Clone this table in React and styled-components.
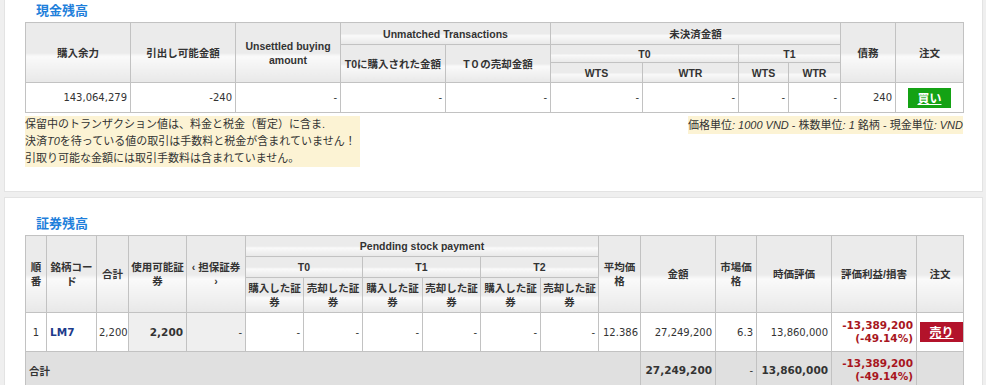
import React from "react";
import styled, { createGlobalStyle } from "styled-components";

const cashCols = [105, 105, 105, 105, 105, 92, 96, 50, 52, 55, 68];
const stockCols = [21, 50, 32, 58, 59, 58, 59, 60, 58, 60, 58, 42, 75, 41, 75, 85, 47];

const GlobalStyle = createGlobalStyle`
  html, body {
    margin: 0;
    padding: 0;
    overflow: hidden;
  }
  body {
    background: #efefef;
    font-family: "DejaVu Sans", "Noto Sans CJK JP", sans-serif;
    font-size: 10px;
    color: #333;
  }
  * {
    box-sizing: border-box;
  }
`;

const App = () => {
  return (
    <Page>
      <GlobalStyle />
      <Panel $top={0} $bottom={24} $noTop>
        <Title>現金残高</Title>
        <Table>
          <colgroup>
            {cashCols.map((w, i) => (
              <col key={i} style={{ width: w }} />
            ))}
          </colgroup>
          <thead>
            <Row $h={22}>
              <Th rowSpan={3}>購入余力</Th>
              <Th rowSpan={3}>引出し可能金額</Th>
              <Th rowSpan={3}>Unsettled buying amount</Th>
              <Th colSpan={2}>Unmatched Transactions</Th>
              <Th colSpan={4}>未決済金額</Th>
              <Th rowSpan={3}>債務</Th>
              <Th rowSpan={3}>注文</Th>
            </Row>
            <Row $h={18}>
              <Th rowSpan={2}>T0に購入された金額</Th>
              <Th rowSpan={2}>T０の売却金額</Th>
              <Th colSpan={2}>T0</Th>
              <Th colSpan={2}>T1</Th>
            </Row>
            <Row $h={20}>
              <Th>WTS</Th>
              <Th>WTR</Th>
              <Th>WTS</Th>
              <Th>WTR</Th>
            </Row>
          </thead>
          <tbody>
            <Row $h={30}>
              <Td>143,064,279</Td>
              <Td>-240</Td>
              <Td>-</Td>
              <Td>-</Td>
              <Td>-</Td>
              <Td>-</Td>
              <Td>-</Td>
              <Td>-</Td>
              <Td>-</Td>
              <Td>240</Td>
              <Td $align="center">
                <OrderButton $kind="buy">買い</OrderButton>
              </Td>
            </Row>
          </tbody>
        </Table>
        <Notes>
          <NoteBox>
            保留中のトランザクション値は、料金と税金（暫定）に含ま.
            <br />
            決済<i>T0</i>を待っている値の取引は手数料と税金が含まれていません！
            <br />
            引取り可能な金額には取引手数料は含まれていません。
          </NoteBox>
          <UnitNote>
            価格単位<i>: 1000 VND</i> - 株数単位<i>: 1</i> 銘柄 - 現金単位<i>: VND</i>
          </UnitNote>
        </Notes>
      </Panel>

      <Panel $top={15} $bottom={20}>
        <Title>証券残高</Title>
        <Table>
          <colgroup>
            {stockCols.map((w, i) => (
              <col key={i} style={{ width: w }} />
            ))}
          </colgroup>
          <thead>
            <Row $h={21}>
              <Th rowSpan={3}>順番</Th>
              <Th rowSpan={3}>銘柄コード</Th>
              <Th rowSpan={3}>合計</Th>
              <Th rowSpan={3}>使用可能証券</Th>
              <Th rowSpan={3}>‹ 担保証券 ›</Th>
              <Th colSpan={6}>Pendding stock payment</Th>
              <Th rowSpan={3}>平均価格</Th>
              <Th rowSpan={3}>金額</Th>
              <Th rowSpan={3}>市場価格</Th>
              <Th rowSpan={3}>時価評価</Th>
              <Th rowSpan={3}>評価利益/損害</Th>
              <Th rowSpan={3}>注文</Th>
            </Row>
            <Row $h={21}>
              <Th colSpan={2}>T0</Th>
              <Th colSpan={2}>T1</Th>
              <Th colSpan={2}>T2</Th>
            </Row>
            <Row $h={35}>
              <Th>購入した証券</Th>
              <Th>売却した証券</Th>
              <Th>購入した証券</Th>
              <Th>売却した証券</Th>
              <Th>購入した証券</Th>
              <Th>売却した証券</Th>
            </Row>
          </thead>
          <tbody>
            <Row $h={39}>
              <Td $align="center">1</Td>
              <Td $align="left">
                <Code>LM7</Code>
              </Td>
              <Td $tight>2,200</Td>
              <Td $bold $shade>
                2,200
              </Td>
              <Td $shade>-</Td>
              <Td>-</Td>
              <Td>-</Td>
              <Td>-</Td>
              <Td>-</Td>
              <Td>-</Td>
              <Td>-</Td>
              <Td $tight>12.386</Td>
              <Td>27,249,200</Td>
              <Td>6.3</Td>
              <Td>13,860,000</Td>
              <Td>
                <Loss>
                  -13,389,200
                  <br />
                  (-49.14%)
                </Loss>
              </Td>
              <Td $align="center">
                <OrderButton $kind="sell">売り</OrderButton>
              </Td>
            </Row>
            <TotalRow $h={37}>
              <Td colSpan={12} $align="left" $bold>
                合計
              </Td>
              <Td $bold>27,249,200</Td>
              <Td>-</Td>
              <Td $bold>13,860,000</Td>
              <Td>
                <Loss>
                  -13,389,200
                  <br />
                  (-49.14%)
                </Loss>
              </Td>
              <Td />
            </TotalRow>
          </tbody>
        </Table>
      </Panel>
    </Page>
  );
};

export default App;

const Page = styled.div`
  height: 385px;
  overflow: hidden;
  padding: 0 3px 0 4px;
`;

const Panel = styled.section`
  background: #fff;
  border: 1px solid #e3e3e3;
  border-top: ${(p) => (p.$noTop ? "none" : "1px solid #e3e3e3")};
  padding: ${(p) => p.$top}px 19px ${(p) => p.$bottom}px 20px;
  margin-bottom: 5px;
`;

const Title = styled.h2`
  margin: 0 0 3px 11px;
  height: 19px;
  line-height: 19px;
  font-family: "Noto Sans CJK JP", sans-serif;
  font-size: 13px;
  font-weight: 700;
  color: #1f7fdb;
`;

const Table = styled.table`
  width: 938px;
  table-layout: fixed;
  border-collapse: collapse;
  border: 1px solid #c2c2c2;
`;

const Row = styled.tr`
  height: ${(p) => p.$h}px;
`;

const TotalRow = styled(Row)`
  td {
    background: #e0e0e0;
  }
`;

const Th = styled.th`
  border: 1px solid #c2c2c2;
  padding: 0 2px;
  background: linear-gradient(
    to bottom,
    #ebebeb 0%,
    #ebebeb 50%,
    #fafafa 56%,
    #e8e8e8 100%
  );
  font-family: "Liberation Sans", "Noto Sans CJK JP", sans-serif;
  font-size: 10.5px;
  font-weight: 700;
  line-height: 14px;
  color: #333;
  text-align: center;
  vertical-align: middle;
`;

const Td = styled.td`
  border: 1px solid #c2c2c2;
  padding: ${(p) => (p.$tight ? "0 2px" : "0 3px")};
  background: ${(p) => (p.$shade ? "#efefef" : "#fff")};
  font-size: ${(p) => (p.$bold ? "10.5px" : "10px")};
  font-weight: ${(p) => (p.$bold ? 700 : 400)};
  text-align: ${(p) => p.$align || "right"};
  vertical-align: middle;
  white-space: nowrap;
`;

const Code = styled.span`
  color: #1d3b8b;
  font-weight: 700;
  font-size: 10.5px;
`;

const Loss = styled.span`
  display: inline-block;
  color: #a8161e;
  font-weight: 700;
  font-size: 10.5px;
  line-height: 13px;
  text-align: right;
`;

const OrderButton = styled.span`
  display: inline-block;
  width: 43px;
  height: 20px;
  line-height: 20px;
  background: ${(p) => (p.$kind === "buy" ? "#14a214" : "#b3132b")};
  color: #fff;
  font-family: "Noto Sans CJK JP", sans-serif;
  font-size: 12px;
  font-weight: 700;
  text-decoration: underline;
  text-align: center;
  cursor: pointer;
`;

const Notes = styled.div`
  display: flex;
  justify-content: space-between;
  align-items: flex-start;
  margin-top: 3px;
`;

const NoteBox = styled.div`
  background: #fcf3d4;
  padding-right: 4px;
  font-family: "Liberation Sans", "Noto Sans CJK JP", sans-serif;
  font-size: 11px;
  line-height: 17px;
  color: #333;
`;

const UnitNote = styled.div`
  background: #fcf3d4;
  font-family: "Liberation Sans", "Noto Sans CJK JP", sans-serif;
  font-size: 11px;
  line-height: 18px;
  color: #333;
  white-space: nowrap;
`;
